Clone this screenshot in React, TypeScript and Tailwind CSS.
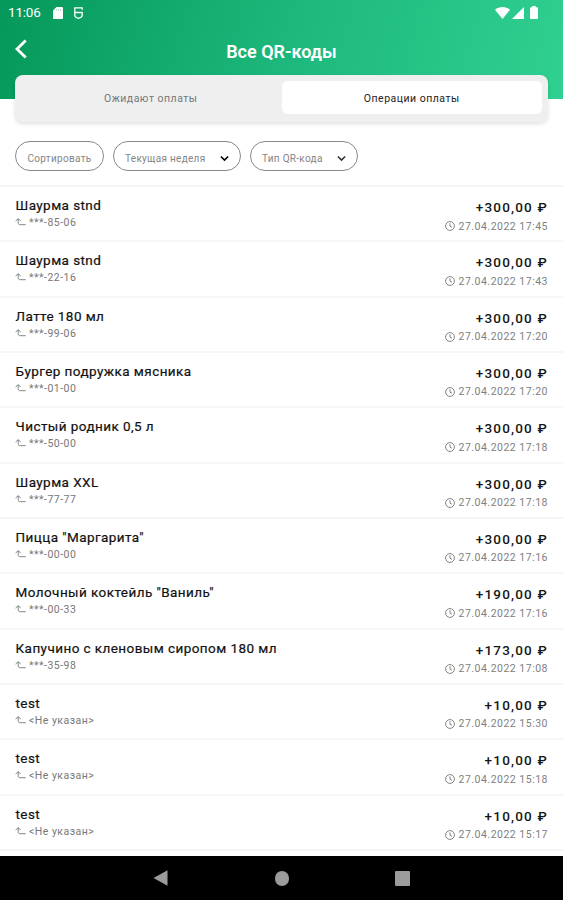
import { useState } from 'react'

type Operation = {
  title: string
  phone: string
  amount: string
  date: string
}

const operations: Operation[] = [
  { title: 'Шаурма stnd', phone: '***-85-06', amount: '+300,00 ₽', date: '27.04.2022 17:45' },
  { title: 'Шаурма stnd', phone: '***-22-16', amount: '+300,00 ₽', date: '27.04.2022 17:43' },
  { title: 'Латте 180 мл', phone: '***-99-06', amount: '+300,00 ₽', date: '27.04.2022 17:20' },
  { title: 'Бургер подружка мясника', phone: '***-01-00', amount: '+300,00 ₽', date: '27.04.2022 17:20' },
  { title: 'Чистый родник 0,5 л', phone: '***-50-00', amount: '+300,00 ₽', date: '27.04.2022 17:18' },
  { title: 'Шаурма XXL', phone: '***-77-77', amount: '+300,00 ₽', date: '27.04.2022 17:18' },
  { title: 'Пицца "Маргарита"', phone: '***-00-00', amount: '+300,00 ₽', date: '27.04.2022 17:16' },
  { title: 'Молочный коктейль "Ваниль"', phone: '***-00-33', amount: '+190,00 ₽', date: '27.04.2022 17:16' },
  { title: 'Капучино с кленовым сиропом 180 мл', phone: '***-35-98', amount: '+173,00 ₽', date: '27.04.2022 17:08' },
  { title: 'test', phone: '<Не указан>', amount: '+10,00 ₽', date: '27.04.2022 15:30' },
  { title: 'test', phone: '<Не указан>', amount: '+10,00 ₽', date: '27.04.2022 15:18' },
  { title: 'test', phone: '<Не указан>', amount: '+10,00 ₽', date: '27.04.2022 15:17' },
]

function StatusBar() {
  return (
    <div className="flex h-6 items-center pt-px pl-2 pr-[25px] text-white">
      <span className="w-[45px] text-[13.5px] leading-none tracking-[-0.2px]">11:06</span>
      <svg className="h-3 w-[10px]" viewBox="0 0 10 12" fill="currentColor">
        <path d="M3.5 0H9a1 1 0 0 1 1 1v10a1 1 0 0 1-1 1H1a1 1 0 0 1-1-1V3.5z" />
        <path d="M3.5 2v1.6M5.5 2v1.6M7.5 2v1.6" stroke="#7ccba6" strokeWidth="0.6" />
      </svg>
      <svg className="ml-[11px] h-3 w-[9px]" viewBox="0 0 9 12" fill="none" stroke="currentColor" strokeWidth="1.3">
        <path d="M8.2 2.8V.8H.8v7.4c0 1.600 1.700 2.600 3.700 3.100 2-.5 3.700-1.500 3.700-3.100V5.500H.8" />
      </svg>
      <div className="ml-auto flex items-center">
        <svg className="h-3 w-[15px]" viewBox="0 0 15 12" fill="currentColor">
          <path d="M0 2.7C4-.9 11-.9 15 2.7L7.5 12z" />
        </svg>
        <svg className="ml-0.5 h-3 w-3" viewBox="0 0 12 12" fill="currentColor">
          <path d="M12 0v12H0z" />
        </svg>
        <svg className="ml-1.5 h-[13px] w-2" viewBox="0 0 8 13" fill="currentColor">
          <path d="M2.3 0h3.4v1.3H7a1 1 0 0 1 1 1V12a1 1 0 0 1-1 1H1a1 1 0 0 1-1-1V2.3a1 1 0 0 1 1-1h1.3z" />
        </svg>
      </div>
    </div>
  )
}

function ReplyIcon() {
  return (
    <svg className="-mt-0.5 h-2 w-[11px]" viewBox="0 0 11 8" fill="none" stroke="#777" strokeWidth="0.9">
      <path d="M.6 3 3.2.7 5.8 3M3.2.9v3.9c0 1.3.7 1.9 2 1.9h5.5" />
    </svg>
  )
}

function ClockIcon() {
  return (
    <svg className="-mt-px h-[10px] w-[10px]" viewBox="0 0 10 10" fill="none" stroke="#777" strokeWidth="0.9">
      <circle cx="5" cy="5" r="4.4" />
      <path d="M5 2.3V5.2l2 1" />
    </svg>
  )
}

function Chevron({ className }: { className: string }) {
  return (
    <svg className={className} viewBox="0 0 8 6" fill="none" stroke="currentColor" strokeWidth="1.4">
      <path d="m.8 1.2 3.2 3.2 3.2-3.2" />
    </svg>
  )
}

function OperationRow({ item }: { item: Operation }) {
  return (
    <li className="flex h-[55.33px] justify-between border-t-2 border-[#f6f6f6] px-[15px]">
      <div>
        <p className="mt-[10px] pl-[0.5px] text-[13.5px] leading-4 tracking-[0.43px] whitespace-nowrap text-[#111] [-webkit-text-stroke:0.2px]">{item.title}</p>
        <p className="mt-1 flex items-center gap-[3px] text-[10.5px] leading-3 tracking-[0.48px] text-[#777]">
          <ReplyIcon />
          {item.phone}
        </p>
      </div>
      <div className="flex flex-col items-end">
        <p className="mt-3 text-[13.5px] leading-4 font-medium tracking-[1.2px] text-[#161616]">{item.amount}</p>
        <p className="mt-[5.5px] flex items-center gap-1 text-[10.5px] leading-3 tracking-[0.5px] text-[#808080]">
          <ClockIcon />
          {item.date}
        </p>
      </div>
    </li>
  )
}

export default function App() {
  const [tab, setTab] = useState('operations')

  return (
    <main className="flex h-[900px] w-[563px] flex-col overflow-hidden bg-white font-['Roboto',sans-serif]">
      <header className="h-[99px] shrink-0 bg-[linear-gradient(105deg,#05985a_0%,#1db77b_50%,#30d091_100%)]">
        <StatusBar />
        <div className="grid h-[51px] grid-cols-[40px_1fr_40px] items-center text-white">
          <button type="button" aria-label="Назад" className="pl-[15px]">
            <svg className="-mt-px h-5 w-3" viewBox="0 0 12 20" fill="none" stroke="currentColor" strokeWidth="2.8">
              <path d="m10.7 1.4-8.700 8.600 8.700 8.600" />
            </svg>
          </button>
          <h1 className="pt-[4px] text-center text-[18px] leading-6 font-semibold">Все QR-коды</h1>
        </div>
        <div className="mx-[15px] grid h-[47px] grid-cols-2 rounded-lg bg-[#efefef] px-[6px] pt-[6px] pb-2 text-[10.5px] shadow-[0_2px_4px_rgba(0,0,0,0.12)]">
          <button
            type="button"
            onClick={() => setTab('pending')}
            className={tab === 'pending' ? 'rounded-md bg-white pt-[3px] tracking-[0.5px] text-[#222]' : 'rounded-md pt-[3px] pr-px tracking-[0.5px] text-[#777]'}
          >
            Ожидают оплаты
          </button>
          <button
            type="button"
            onClick={() => setTab('operations')}
            className={tab === 'operations' ? 'rounded-md bg-white pt-[3px] tracking-[0.5px] text-[#222]' : 'rounded-md pt-[3px] tracking-[0.5px] text-[#777]'}
          >
            Операции оплаты
          </button>
        </div>
      </header>

      <div className="flex h-[86px] shrink-0 items-start gap-[9px] px-[15px] pt-[42px] text-[10px] tracking-[0.3px] text-[#858585]">
        <button type="button" className="h-[30px] w-[89px] rounded-full border border-[#888] pt-1">
          Сортировать
        </button>
        <button type="button" className="flex h-[30px] w-[128px] items-center justify-between rounded-full border border-[#888] pt-1 pr-[11px] pl-[11px]">
          Текущая неделя
          <Chevron className="h-[7px] w-[9px] text-black" />
        </button>
        <button type="button" className="flex h-[30px] w-[108px] items-center justify-between rounded-full border border-[#888] pt-1 pr-[11px] pl-[11px]">
          Тип QR-кода
          <Chevron className="h-[7px] w-[9px] text-[#333]" />
        </button>
      </div>

      <ul className="h-[671px] shrink-0">
        {operations.map((item, index) => (
          <OperationRow key={index} item={item} />
        ))}
        <li className="border-t-2 border-[#f6f6f6]" />
      </ul>

      <nav className="flex flex-1 items-center justify-between bg-black px-[153px]">
        <svg className="h-4 w-[15px]" viewBox="0 0 15 16" fill="#9b9b9b">
          <path d="M.5 8 14.5.3v15.4z" />
        </svg>
        <span className="h-[15px] w-[14px] rounded-full bg-[#9b9b9b]" />
        <span className="h-[15px] w-[15px] rounded-[1px] bg-[#9b9b9b]" />
      </nav>
    </main>
  )
}
